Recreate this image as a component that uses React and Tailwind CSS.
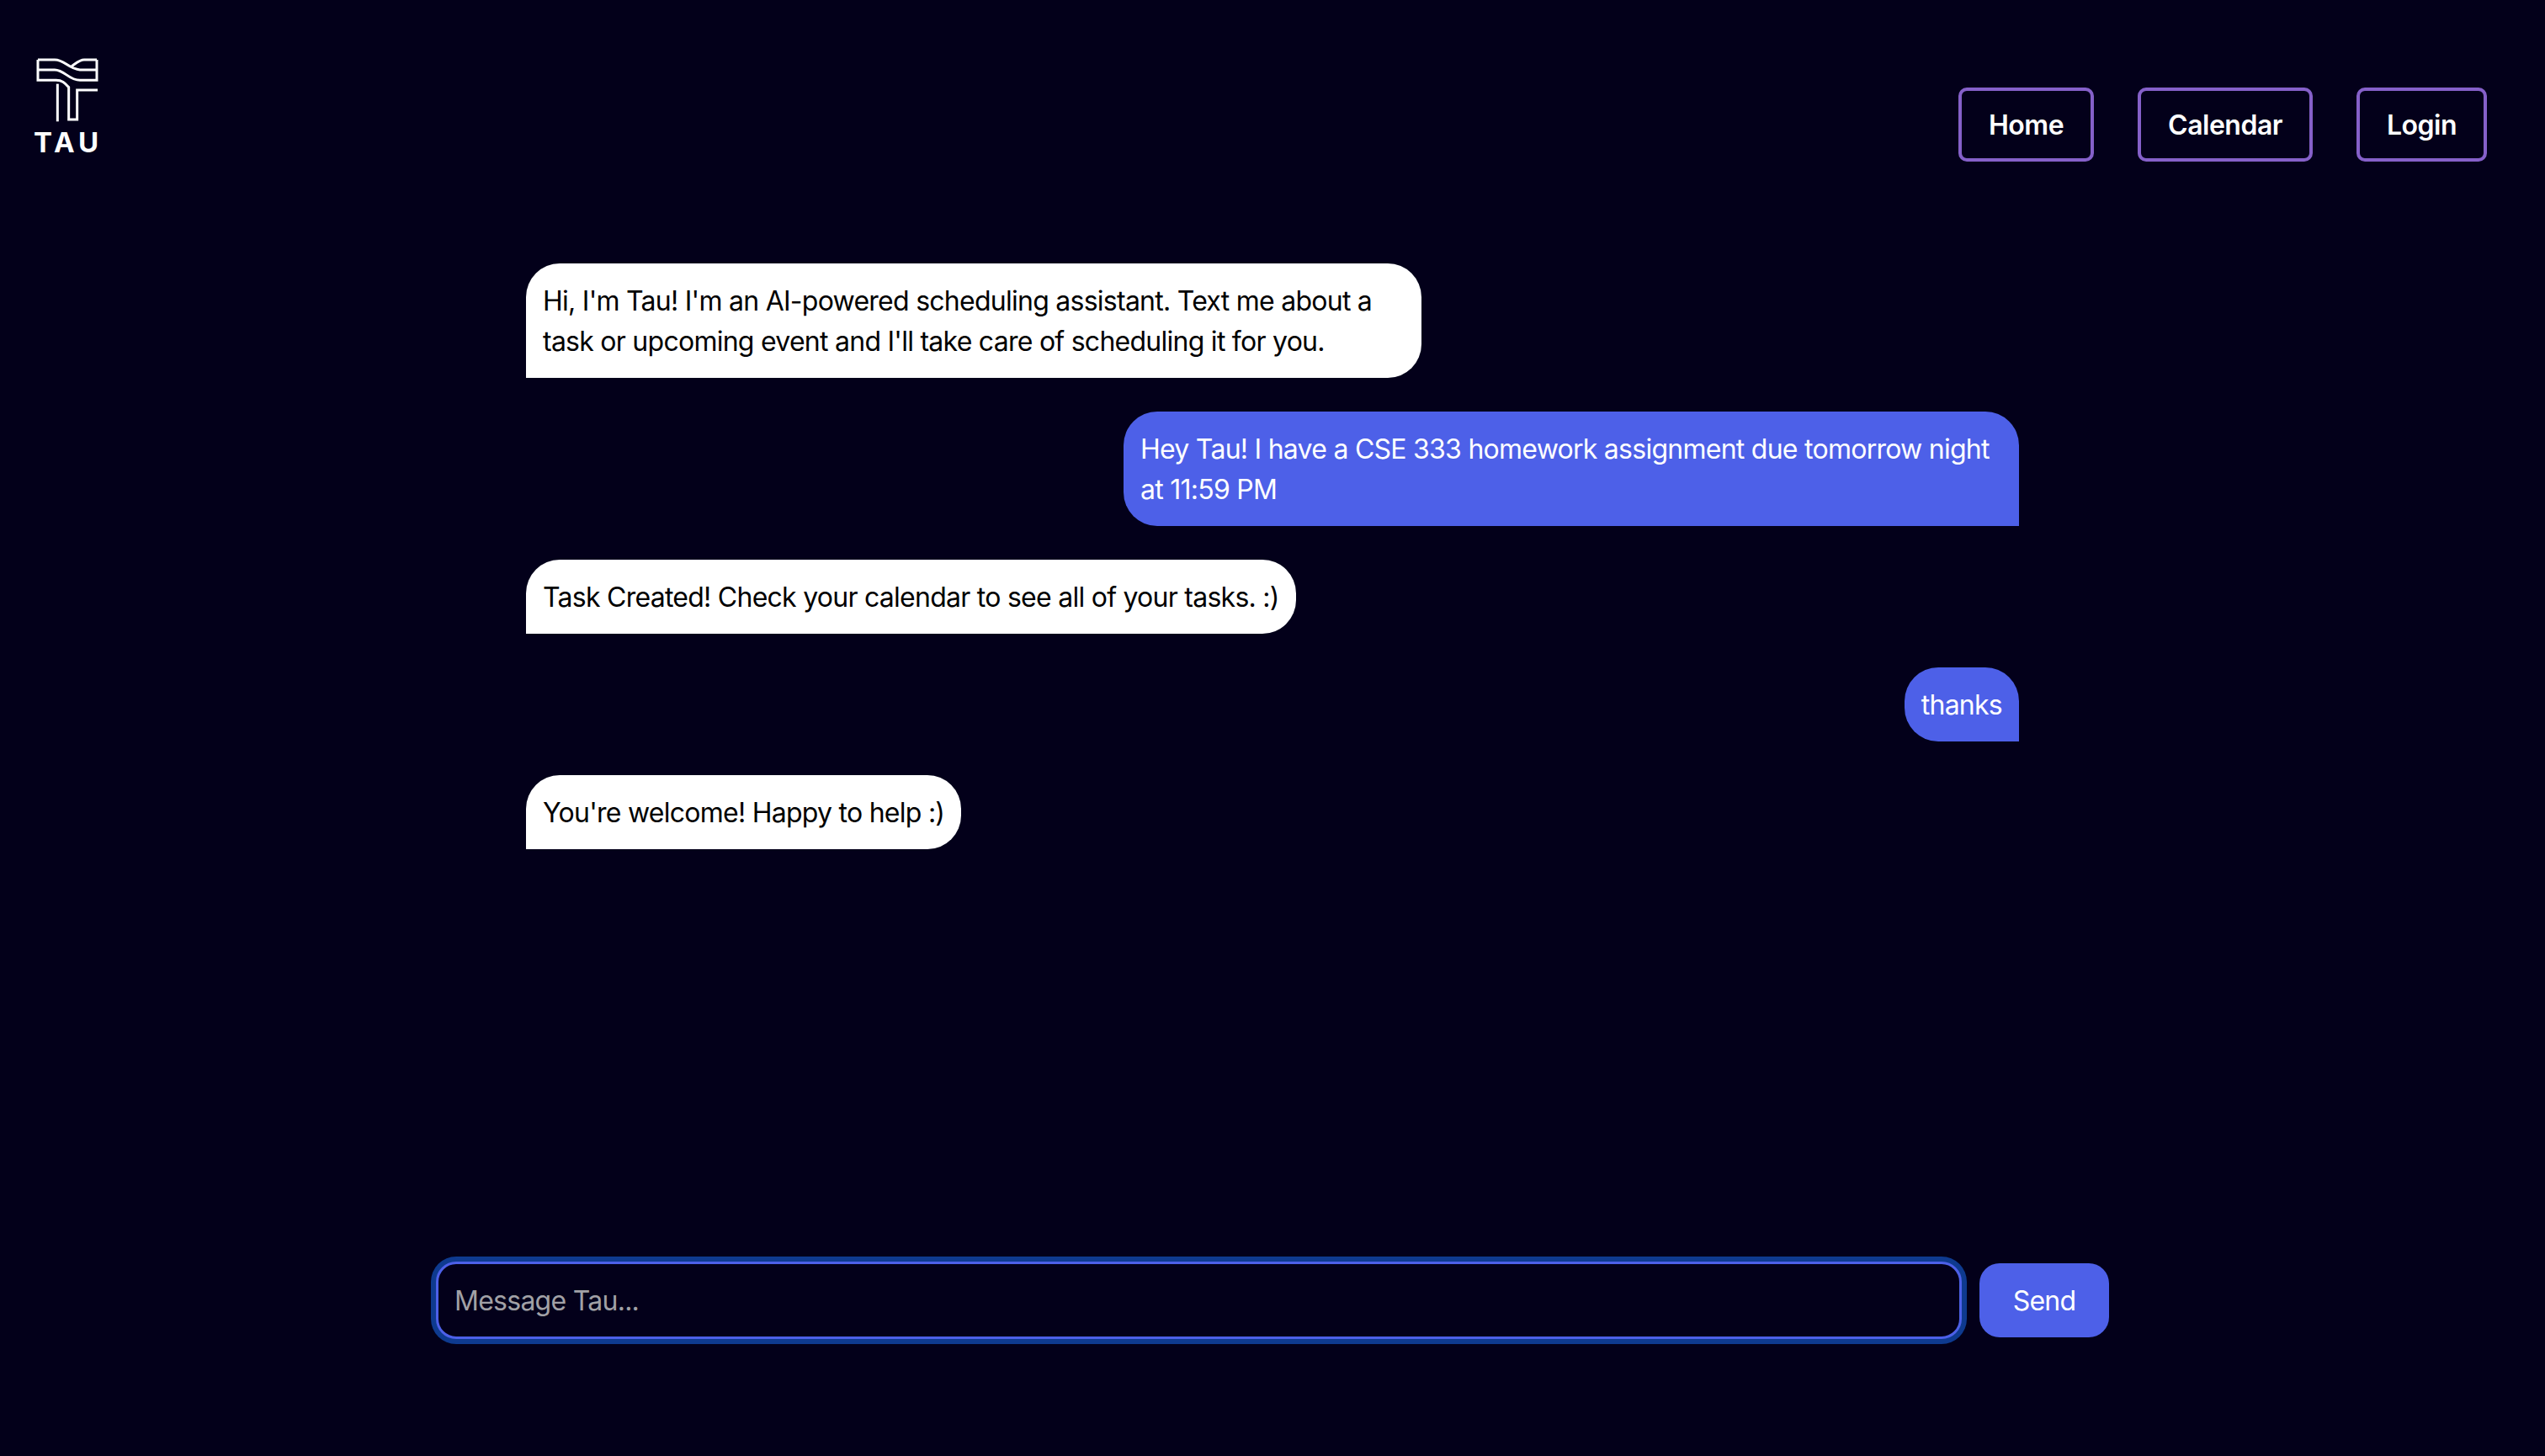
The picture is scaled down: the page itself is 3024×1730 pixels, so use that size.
const messages = [
  { from: "bot", text: "Hi, I'm Tau! I'm an AI-powered scheduling assistant. Text me about a task or upcoming event and I'll take care of scheduling it for you." },
  { from: "user", text: "Hey Tau! I have a CSE 333 homework assignment due tomorrow night at 11:59 PM" },
  { from: "bot", text: "Task Created! Check your calendar to see all of your tasks. :)" },
  { from: "user", text: "thanks" },
  { from: "bot", text: "You're welcome! Happy to help :)" },
];

const navLinks = ["Home", "Calendar", "Login"];

function Logo() {
  return (
    <div className="flex flex-col items-start">
      <svg width="80" height="80" viewBox="120 80 240 240" fill="none" stroke="white" strokeWidth="9">
        <path d="M135 92H195C230 92 245 125 285 128H345" />
        <path d="M345 92H300C285 92 270 105 255 115" />
        <path d="M345 92V165H285C245 165 230 128 195 128H135" />
        <path d="M135 92V165H200C225 165 235 180 245 190V305H275V200H348" />
        <path d="M205 178V312" />
      </svg>
      <div className="mt-[4px] text-[33px] leading-[36px] font-bold tracking-[5px] text-white">TAU</div>
    </div>
  );
}

export default function App() {
  return (
    <div className="flex h-screen flex-col bg-[#03001a] font-['Inter',sans-serif] text-[32px] leading-[48px] tracking-[-0.74px]">
      <header className="flex items-start justify-between pt-[67px] pr-[69px] pl-[40px]">
        <Logo />
        <nav className="mt-[37px] flex gap-[52px]">
          {navLinks.map((link) => (
            <button key={link} className="h-[88px] rounded-[10px] border-4 border-[#8560c9] px-[32px] pt-[2px] font-semibold tracking-[-0.5px] text-white">
              {link}
            </button>
          ))}
        </nav>
      </header>

      <main className="mx-auto mt-[121px] flex w-[1774px] flex-1 flex-col gap-[40px]">
        {messages.map((msg, idx) => (
          <div
            key={idx}
            className={
              msg.from === "bot"
                ? "max-w-[1064px] self-start rounded-[40px] rounded-bl-none bg-white px-[20px] pt-[20px] pb-[20px] text-black"
                : "max-w-[1064px] self-end rounded-[40px] rounded-br-none bg-[#4d60e8] px-[20px] pt-[20px] pb-[20px] text-white"
            }
          >
            <span className="relative top-[1px]">{msg.text}</span>
          </div>
        ))}
      </main>

      <div className="mx-auto mb-[139px] flex w-[1988px] items-center gap-[21px]">
        <input
          placeholder="Message Tau..."
          className="h-[92px] flex-1 rounded-[24px] border-[3px] border-[#4d60e8] bg-[#03001a] px-[19px] text-white ring-[6px] ring-[#0e3a8f] outline-none placeholder:text-[#a1a1a6]"
        />
        <button className="h-[88px] w-[154px] rounded-[24px] bg-[#4d60e8] pt-[2px] text-white">Send</button>
      </div>
    </div>
  );
}
